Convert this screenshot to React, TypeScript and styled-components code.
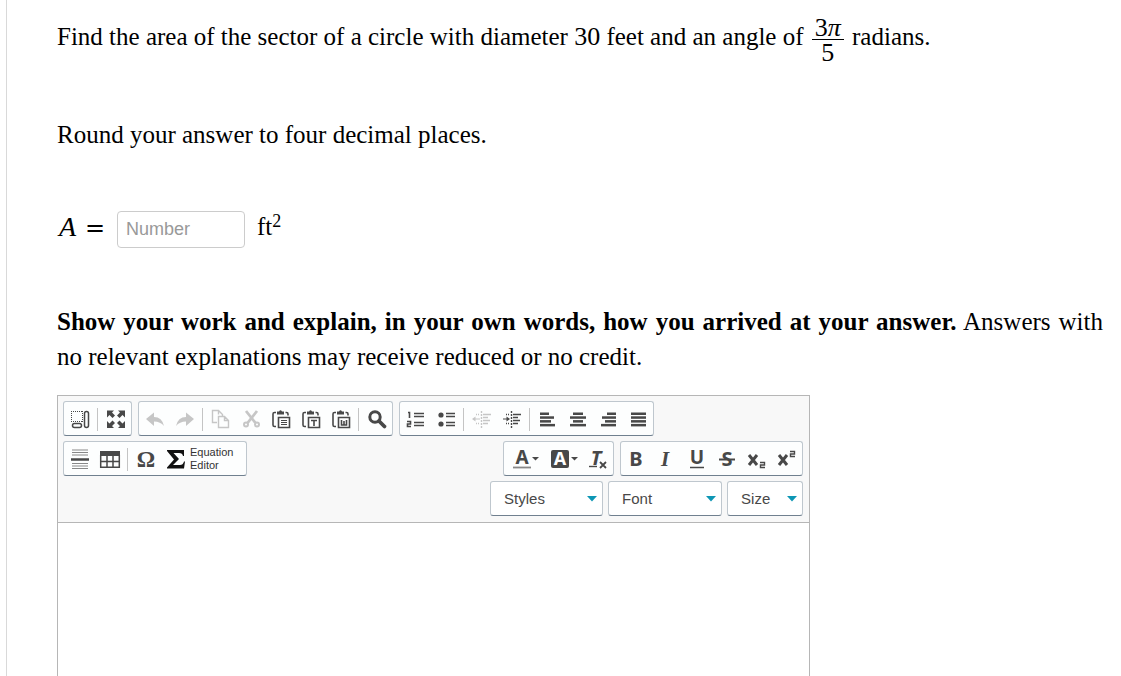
import React from "react";
import styled, { createGlobalStyle } from "styled-components";

const SERIF = '"Liberation Serif", "Times New Roman", serif';
const SANS = '"Liberation Sans", Arial, sans-serif';
const INK = "#484848";

const GlobalStyle = createGlobalStyle`
  * { box-sizing: border-box; }
  html { scrollbar-width: none; }
  body { margin: 0; background: #fff; color: #000; font: 25px/35px ${SERIF}; }
`;

const Page = styled.main`
  display: flex;
  flex-direction: column;
  gap: 54px;
  min-height: 100vh;
  margin-left: 6px;
  padding: 16px 18px 20px 50px;
  border-left: 1px solid #d9d9d9;
`;

const Paragraph = styled.p<{ $justify?: boolean }>`
  margin: 0;
  text-align: ${(p) => (p.$justify ? "justify" : "left")};
`;

const MathText = styled.span`
  font-size: 26px;
`;

const Fraction = styled.span`
  display: inline-flex;
  flex-direction: column;
  vertical-align: middle;
  width: 32px;
  margin: 0 2px;
  text-align: center;
  font-size: 26px;
  line-height: 20px;
`;

const FractionPart = styled.span<{ $over?: boolean }>`
  padding: ${(p) => (p.$over ? "2px 0 1px" : "3px 0 0")};
  border-bottom: ${(p) => (p.$over ? "1px solid #000" : "0")};
`;

const AnswerRow = styled.div`
  display: flex;
  align-items: flex-start;
  gap: 12px;
  padding: 5px 0 2px;
  line-height: 32px;
`;

const Variable = styled.label`
  display: flex;
  align-items: baseline;
  justify-content: space-between;
  width: 48px;
  height: 32px;
  padding-left: 2px;
  font-size: 28px;
  font-style: italic;
`;

const Equals = styled.span`
  font: normal 24px/32px "DejaVu Serif", serif;
`;

const AnswerInput = styled.input`
  width: 128px;
  height: 37px;
  padding: 0 8px;
  border: 1px solid #ccc;
  border-radius: 4px;
  font: 18px ${SANS};
  color: #333;
  &::placeholder { color: #999; opacity: 1; }
`;

const Unit = styled.span`
  display: flex;
  align-items: flex-start;
`;

const Power = styled.sup`
  font-size: 18px;
  line-height: 20px;
`;

const Prompt = styled.section`
  display: flex;
  flex-direction: column;
  gap: 21px;
`;

const Editor = styled.div`
  width: 72%;
  min-width: 753px;
  border: 1px solid #b6b6b6;
  font-family: ${SANS};
`;

const Toolbar = styled.div`
  display: flex;
  flex-direction: column;
  gap: 5px;
  padding: 5px 6px 6px 5px;
  background: #f8f8f8;
  border-bottom: 1px solid #b6b6b6;
`;

const Row = styled.div<{ $gap?: number; $end?: boolean }>`
  display: flex;
  gap: ${(p) => p.$gap ?? 6}px;
  justify-content: ${(p) => (p.$end ? "flex-end" : "flex-start")};
`;

const SplitRow = styled.div`
  display: flex;
  justify-content: space-between;
`;

const Group = styled.div`
  display: flex;
  align-items: center;
  height: 35px;
  padding-left: 1px;
  background: #fdfefe;
  border: 1px solid #bfc7ce;
  border-bottom-color: #70808f;
  border-radius: 3px;
`;

const ToolButton = styled.button<{ $width?: number; $off?: boolean }>`
  display: flex;
  align-items: center;
  justify-content: center;
  gap: 1px;
  width: ${(p) => p.$width ?? 30}px;
  height: 33px;
  padding: 0;
  border: 0;
  background: none;
  color: ${(p) => (p.$off ? "#c6c6c6" : INK)};
`;

const EquationButton = styled(ToolButton)`
  justify-content: flex-start;
  padding-left: 5px;
`;

const Separator = styled.span`
  width: 1px;
  height: 23px;
  margin: 2px 3px 0 2px;
  background: #c4c4c4;
`;

const EquationLabel = styled.span`
  padding-left: 3px;
  text-align: left;
  font: 11px/13px ${SANS};
  color: #333;
`;

const SelectBox = styled.label<{ $width: number }>`
  display: flex;
  align-items: center;
  position: relative;
  width: ${(p) => p.$width}px;
  height: 35px;
  background: #fff;
  border: 1px solid #bfc7ce;
  border-bottom-color: #70808f;
  border-radius: 3px;
`;

const Select = styled.select`
  appearance: none;
  width: 100%;
  height: 33px;
  padding: 0 0 0 13px;
  border: 0;
  background: none;
  color: ${INK};
  font: 15px ${SANS};
`;

const SelectArrow = styled.svg`
  position: absolute;
  right: 5px;
  pointer-events: none;
`;

const Writing = styled.textarea`
  display: block;
  width: 100%;
  height: 200px;
  padding: 20px;
  border: 0;
  outline: 0;
  resize: none;
  background: #fff;
  font: 16px ${SANS};
`;

const Icon = ({ children }: { children: React.ReactNode }) => (
  <svg width="20" height="32" viewBox="0 -6 20 32" fill="none" stroke="currentColor" overflow="visible" aria-hidden="true">
    {children}
  </svg>
);

const Letter = ({ x, y = 16, size = 19, weight = 700, family = "Noto Sans", italic = false, fill = "currentColor", children }: {
  x: number; y?: number; size?: number; weight?: number; family?: string; italic?: boolean; fill?: string; children: string;
}) => (
  <text x={x} y={y} fontSize={size} fontWeight={weight} fontFamily={`"${family}", sans-serif`}
    fontStyle={italic ? "italic" : "normal"} fill={fill} stroke="none" textAnchor="middle">{children}</text>
);

const Clipboard = ({ children }: { children: React.ReactNode }) => (
  <Icon>
    <path d="M5 3.500H3.500q-1.500 0-1.500 1.500V16q0 1.500 1.500 1.500H5M14.500 3.500h1q1.500 0 1.500 1.500V6.500" strokeWidth="1.600" />
    <path d="M6 5.500V2.500h2Q9.500 0 11 2.500h2v3Z" fill="currentColor" stroke="none" />
    <path d="M7.500 8.500h11v10h-11Z" strokeWidth="1.600" fill="#fff" />
    {children}
  </Icon>
);

const Align = ({ lines }: { lines: [number, number][] }) => (
  <Icon>
    {lines.map(([x, w], i) => (
      <rect key={i} x={x} y={3.5 + i * 3.8} width={w} height="2.500" fill="currentColor" stroke="none" />
    ))}
  </Icon>
);

const IndentLines = () => (
  <>
    <path d="M9.500 2v17" strokeWidth="1.400" strokeDasharray="2 1" />
    <path d="M4 5.500h3M4 14.500h3" strokeWidth="1.400" strokeDasharray="1 1" />
    <path d="M11 5.500h8M11 8.500h5M11 11.500h7M11 14.500h5" strokeWidth="1.600" />
  </>
);

const Caret = () => (
  <svg width="7" height="4" viewBox="0 0 7 4" aria-hidden="true"><path d="M0 0h7L3.500 3.500Z" fill={INK} /></svg>
);

const Tool = ({ label, off, width, children }: { label: string; off?: boolean; width?: number; children: React.ReactNode }) => (
  <ToolButton type="button" aria-label={label} $off={off} $width={width}>{children}</ToolButton>
);

const Dropdown = ({ label, width }: { label: string; width: number }) => (
  <SelectBox $width={width}>
    <Select aria-label={label}><option>{label}</option></Select>
    <SelectArrow width="10" height="6" viewBox="0 0 10 6" aria-hidden="true">
      <path d="M0 0h10L5 5.500Z" fill="#0d96b4" />
    </SelectArrow>
  </SelectBox>
);

export default function App() {
  return (
    <>
      <GlobalStyle />
      <Page>
        <Paragraph>
          Find the area of the sector of a circle with diameter <MathText>30</MathText> feet and an angle of{" "}
          <Fraction>
            <FractionPart $over>3<i>π</i></FractionPart>
            <FractionPart>5</FractionPart>
          </Fraction>{" "}
          radians.
        </Paragraph>
        <Paragraph>Round your answer to four decimal places.</Paragraph>
        <AnswerRow>
          <Variable htmlFor="area">A<Equals>=</Equals></Variable>
          <AnswerInput id="area" placeholder="Number" />
          <Unit>ft<Power>2</Power></Unit>
        </AnswerRow>
        <Prompt>
          <Paragraph $justify>
            <b>Show your work and explain, in your own words, how you arrived at your answer.</b> Answers with no
            relevant explanations may receive reduced or no credit.
          </Paragraph>
          <Editor>
            <Toolbar>
              <Row>
                <Group>
                  <Tool label="Show blocks">
                    <Icon>
                      <path d="M1 2.500h12M1 12.500h12M1.500 2v11M12.500 2v11" strokeDasharray="1 1" />
                      <rect x="14.500" y="2.500" width="4" height="16" rx="2" strokeWidth="1.500" />
                      <rect x="2.500" y="14.500" width="9" height="4" rx="2" strokeWidth="1.500" />
                    </Icon>
                  </Tool>
                  <Separator />
                  <Tool label="Maximize">
                    <Icon>
                      <path d="M1 1.500h7L6 3.500l3 3-2.500 2.500-3-3L1 8.500ZM19 1.500v7l-2.500-2.500-3 3L11 6.500l3-3-2-2ZM1 19v-7l2.500 2.500 3-3L9 14l-3 3 2 2ZM19 19h-7l2-2-3-3 2.500-2.500 3 3L19 12Z" fill="currentColor" stroke="none" />
                    </Icon>
                  </Tool>
                </Group>
                <Group>
                  <Tool label="Undo" off>
                    <Icon><path d="M1 10 9 3.500V8q8 0 10 9-3.500-4.500-10-4.500V17Z" fill="currentColor" stroke="none" /></Icon>
                  </Tool>
                  <Tool label="Redo" off>
                    <Icon><path d="M19 10 11 3.500V8q-8 0-10 9 3.500-4.500 10-4.500V17Z" fill="currentColor" stroke="none" /></Icon>
                  </Tool>
                  <Separator />
                  <Tool label="Copy" off>
                    <Icon>
                      <path d="M6 13.500H1.500v-12h6l4 4V7M7.500 1.500v4" strokeWidth="1.400" />
                      <path d="M7.500 7.500h6l4 4v7h-10ZM13.500 7.500v4h4" strokeWidth="1.400" />
                    </Icon>
                  </Tool>
                  <Tool label="Cut" off>
                    <Icon>
                      <path d="m5 2 9.500 12M16 2 6.500 14" strokeWidth="2.800" />
                      <circle cx="5" cy="15.500" r="2" strokeWidth="2" />
                      <circle cx="16" cy="15.500" r="2" strokeWidth="2" />
                    </Icon>
                  </Tool>
                  <Tool label="Paste">
                    <Clipboard><path d="M10 11.500h6M10 13.500h6M10 15.500h6" strokeWidth="1.200" /></Clipboard>
                  </Tool>
                  <Tool label="Paste as plain text">
                    <Clipboard><path d="M10 11.500h6M13 11v6" strokeWidth="1.600" /></Clipboard>
                  </Tool>
                  <Tool label="Paste from Word">
                    <Clipboard><path d="M10.500 11v5h5v-5M13 12v4" strokeWidth="1.600" /></Clipboard>
                  </Tool>
                  <Separator />
                  <Tool label="Find">
                    <Icon>
                      <circle cx="8" cy="8" r="5.200" strokeWidth="3" />
                      <path d="m12 12 5.500 5.500" strokeWidth="3.800" strokeLinecap="round" />
                    </Icon>
                  </Tool>
                </Group>
                <Group>
                  <Tool label="Numbered list">
                    <Icon>
                      <path d="M2 3.500h1.500V9M1 12.500h3.500v2.500h-3v2.500H5" strokeWidth="1.600" />
                      <path d="M8 4.500h10M8 7.500h10M8 13.500h10M8 16.500h10" strokeWidth="1.500" />
                    </Icon>
                  </Tool>
                  <Tool label="Bulleted list">
                    <Icon>
                      <path d="M10 4.500h9M10 7.500h9M10 13.500h9M10 16.500h9" strokeWidth="1.500" />
                      <circle cx="5" cy="6" r="2.600" fill="currentColor" stroke="none" />
                      <circle cx="5" cy="15" r="2.600" fill="currentColor" stroke="none" />
                    </Icon>
                  </Tool>
                  <Separator />
                  <Tool label="Decrease indent" off>
                    <Icon><IndentLines /><path d="M8 10H2" /><path d="m0 10 3.500-2.500v5Z" fill="currentColor" stroke="none" /></Icon>
                  </Tool>
                  <Tool label="Increase indent">
                    <Icon><IndentLines /><path d="M1 10h5" /><path d="M8 10 4.500 7.500v5Z" fill="currentColor" stroke="none" /></Icon>
                  </Tool>
                  <Separator />
                  <Tool label="Align left"><Align lines={[[2, 9], [2, 14], [2, 11], [2, 15]]} /></Tool>
                  <Tool label="Center"><Align lines={[[5, 10], [2, 16], [5, 10], [2, 16]]} /></Tool>
                  <Tool label="Align right"><Align lines={[[9, 9], [4, 14], [7, 11], [3, 15]]} /></Tool>
                  <Tool label="Justify"><Align lines={[[3, 15], [3, 15], [3, 15], [3, 15]]} /></Tool>
                </Group>
              </Row>
              <SplitRow>
                <Group>
                  <Tool label="Horizontal line">
                    <Icon>
                      <path d="M2 1h16M2 3.500h16M2 6h16M2 14.500h16M2 17h16M2 19.500h16" stroke="#888" />
                      <path d="M1 10.500h18" strokeWidth="2.500" />
                    </Icon>
                  </Tool>
                  <Tool label="Table">
                    <Icon>
                      <path d="M0 2h20v5H0Z" fill="currentColor" stroke="none" />
                      <path d="M.7 6v12.300h18.600V6M1 12.500h18M7 6v12M13 6v12" strokeWidth="1.500" />
                    </Icon>
                  </Tool>
                  <Separator />
                  <Tool label="Special character">
                    <Icon><Letter x={10} y={18} size={23} family="Liberation Serif">Ω</Letter></Icon>
                  </Tool>
                  <EquationButton type="button" $width={85}>
                    <Icon>
                      <path d="M1 1h17v6h-1Q16.500 4 13 4H7.500l5.500 6L7 16h7q3 0 4-3.500h1L18 19.500H1v-1l7-8L1 2Z" fill="#111" stroke="none" />
                    </Icon>
                    <EquationLabel>Equation<br />Editor</EquationLabel>
                  </EquationButton>
                </Group>
                <Row>
                  <Group>
                    <Tool label="Text color" width={39}>
                      <Icon><Letter x={11} y={15}>A</Letter><path d="M2 18.500h18" stroke="#888" strokeWidth="1.800" /></Icon>
                      <Caret />
                    </Tool>
                    <Tool label="Background color" width={39}>
                      <Icon>
                        <rect x="1" y="1" width="18" height="18" rx="2" fill="currentColor" stroke="none" />
                        <Letter x={10} y={16} size={18} fill="#fff">A</Letter>
                      </Icon>
                      <Caret />
                    </Tool>
                    <Tool label="Remove format">
                      <Icon>
                        <Letter x={8} y={16} size={20} italic>T</Letter>
                        <path d="M1 17.500h8" strokeWidth="1.400" />
                        <path d="m12 13 6 6M18 13l-6 6" strokeWidth="1.800" />
                      </Icon>
                    </Tool>
                  </Group>
                  <Group>
                    <Tool label="Bold"><Icon><Letter x={9} y={17} size={20}>B</Letter></Icon></Tool>
                    <Tool label="Italic"><Icon><Letter x={8} y={17} size={21} family="Liberation Serif" italic>I</Letter></Icon></Tool>
                    <Tool label="Underline"><Icon><Letter x={10} y={15}>U</Letter><path d="M3 18.500h14" strokeWidth="1.500" /></Icon></Tool>
                    <Tool label="Strikethrough"><Icon><Letter x={10} y={17} size={20}>S</Letter><path d="M2 10.500h16" strokeWidth="2" /></Icon></Tool>
                    <Tool label="Subscript">
                      <Icon><path d="m2 6 8 10M10 6 2 16" strokeWidth="3" /><path d="M13 13.500h4.500V16h-4v2.500H18" strokeWidth="1.400" /></Icon>
                    </Tool>
                    <Tool label="Superscript">
                      <Icon><path d="m2 6 8 10M10 6 2 16" strokeWidth="3" /><path d="M13 2.500h4.500V5h-4v2.500H18" strokeWidth="1.400" /></Icon>
                    </Tool>
                  </Group>
                </Row>
              </SplitRow>
              <Row $gap={5} $end>
                <Dropdown label="Styles" width={113} />
                <Dropdown label="Font" width={114} />
                <Dropdown label="Size" width={76} />
              </Row>
            </Toolbar>
            <Writing aria-label="Your work and explanation" />
          </Editor>
        </Prompt>
      </Page>
    </>
  );
}
